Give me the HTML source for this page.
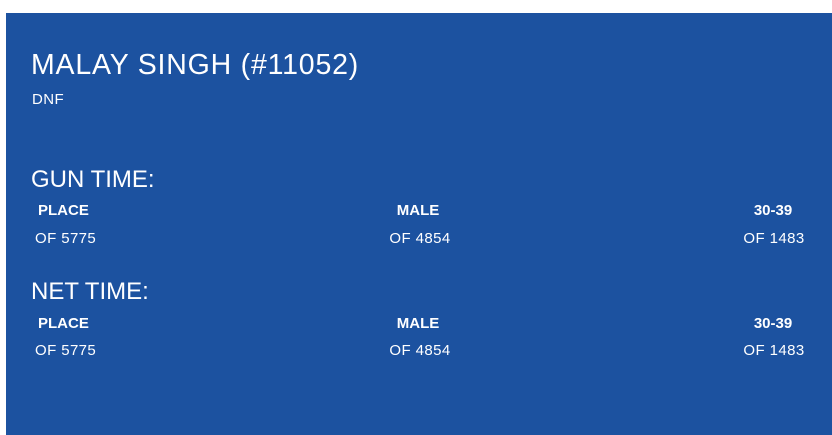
<!DOCTYPE html>
<html><head><style>
html,body{margin:0;padding:0;width:832px;height:435px;background:#fff;overflow:hidden;font-family:"Liberation Sans",sans-serif;color:#fff}
.p{position:absolute;left:6px;top:13px;width:826px;height:422px;background:#1c52a0}
.t{position:absolute;white-space:nowrap;line-height:1}
.c{transform:translateX(-50%)}
.b{font-weight:bold;font-size:15px}
.s{font-size:15px;letter-spacing:0.4px}
</style></head><body>
<div class="p"></div>
<div class="t" style="left:31px;top:51px;font-size:28.5px;letter-spacing:0.8px">MALAY SINGH (#11052)</div>
<div class="t s" style="left:32px;top:92px">DNF</div>

<div class="t" style="left:31px;top:168px;font-size:24px">GUN TIME:</div>
<div class="t b" style="left:38px;top:203px">PLACE</div>
<div class="t b c" style="left:418px;top:203px">MALE</div>
<div class="t b c" style="left:773px;top:203px">30-39</div>
<div class="t s" style="left:35px;top:231px">OF 5775</div>
<div class="t s c" style="left:420px;top:231px">OF 4854</div>
<div class="t s c" style="left:774px;top:231px">OF 1483</div>

<div class="t" style="left:31px;top:280px;font-size:24px">NET TIME:</div>
<div class="t b" style="left:38px;top:316px">PLACE</div>
<div class="t b c" style="left:418px;top:316px">MALE</div>
<div class="t b c" style="left:773px;top:316px">30-39</div>
<div class="t s" style="left:35px;top:343px">OF 5775</div>
<div class="t s c" style="left:420px;top:343px">OF 4854</div>
<div class="t s c" style="left:774px;top:343px">OF 1483</div>
</body></html>
